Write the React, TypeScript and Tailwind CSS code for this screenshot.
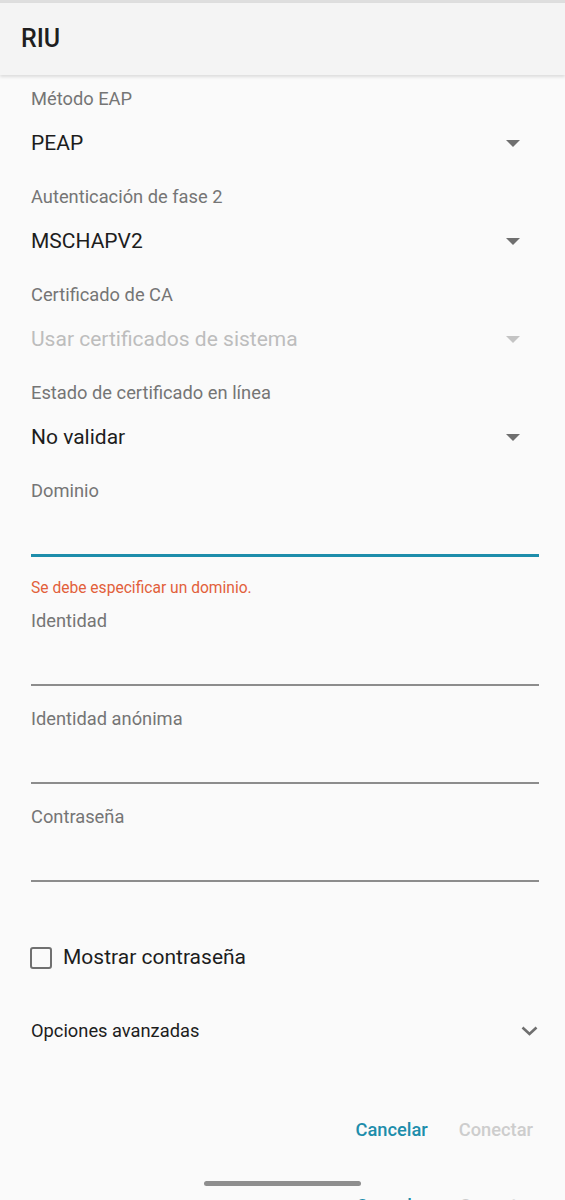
import React from 'react';

const font = { fontFamily: 'Roboto, "Noto Sans", sans-serif' };

function Caret({ disabled }: { disabled?: boolean }) {
  return (
    <svg width="14" height="7" viewBox="0 0 14 7" className="mr-[19px]">
      <path d="M0 0 L14 0 L7 7 Z" fill={disabled ? '#c4c4c4' : '#6f6f6f'} />
    </svg>
  );
}

function SelectField({ label, value, disabled }: { label: string; value: string; disabled?: boolean }) {
  return (
    <div className="pb-[30px]">
      <div className="h-6 leading-6 text-[18.3px] text-[#757575]">{label}</div>
      <div className="mt-5 h-6 flex items-center justify-between">
        <span className={`text-[21px] leading-6 ${disabled ? 'text-[#bdbdbd]' : 'text-[#1d1d1d]'}`}>{value}</span>
        <Caret disabled={disabled} />
      </div>
    </div>
  );
}

function TextField({ label, focused }: { label: string; focused?: boolean }) {
  return (
    <div>
      <div className="h-6 leading-6 text-[18.3px] text-[#757575]">{label}</div>
      <div className="h-[51px]" />
      <div className={focused ? 'h-[3px] bg-[#1d8dab]' : 'h-[2px] bg-[#8c8c8c]'} />
    </div>
  );
}

export default function App() {
  return (
    <div className="w-[565px] h-[1200px] overflow-hidden bg-[#fafafa] relative" style={font}>
      <div className="h-[3px] bg-[#dedede]" />
      <header className="h-[72px] bg-[#f4f4f4] flex items-center px-[21px] shadow-[0_2px_3px_rgba(0,0,0,0.12)] relative z-10">
        <h1 className="text-[25px] font-medium text-[#1f1f1f]">RIU</h1>
      </header>

      <div className="pl-[31px] pr-[26px] pt-[12px]">
        <SelectField label="Método EAP" value="PEAP" />
        <SelectField label="Autenticación de fase 2" value="MSCHAPV2" />
        <SelectField label="Certificado de CA" value="Usar certificados de sistema" disabled />
        <SelectField label="Estado de certificado en línea" value="No validar" />

        <TextField label="Dominio" focused />
        <div className="mt-[21px] h-5 leading-5 text-[15.6px] text-[#e2603a]">Se debe especificar un dominio.</div>

        <div className="mt-[11px]">
          <TextField label="Identidad" />
        </div>
        <div className="mt-[21px]">
          <TextField label="Identidad anónima" />
        </div>
        <div className="mt-[21px]">
          <TextField label="Contraseña" />
        </div>

        <div className="mt-[64px] flex items-center h-[24px]">
          <div className="w-[22px] h-[22px] border-[2.5px] border-[#707070] rounded-[3px] -ml-[1px]" />
          <span className="ml-[11px] text-[21px] text-[#1d1d1d]">Mostrar contraseña</span>
        </div>

        <div className="mt-[49px] h-6 flex items-center justify-between">
          <span className="text-[18.3px] text-[#1d1d1d]">Opciones avanzadas</span>
          <svg width="17" height="10" viewBox="0 0 17 10" className="mr-[1px]">
            <path d="M1.5 1.5 L8.5 8 L15.5 1.5" fill="none" stroke="#6f6f6f" strokeWidth="2.6" />
          </svg>
        </div>

        <div className="mt-[75px] h-6 flex justify-end items-center gap-[31px] pr-[6px]">
          <button className="text-[18.3px] leading-6 font-medium text-[#1d8dab]">Cancelar</button>
          <button className="text-[18.3px] leading-6 font-medium text-[#cdcdcd]">Conectar</button>
        </div>
      </div>

      <div className="absolute left-[204px] top-[1181px] w-[157px] h-[5px] rounded-full bg-[#8e8e8e]" />
      <div className="absolute left-[356px] top-[1194px] flex gap-[31px] text-[18.3px] font-medium leading-6">
        <span className="text-[#1d8dab]">Cancelar</span>
        <span className="text-[#cdcdcd]">Conectar</span>
      </div>
    </div>
  );
}
